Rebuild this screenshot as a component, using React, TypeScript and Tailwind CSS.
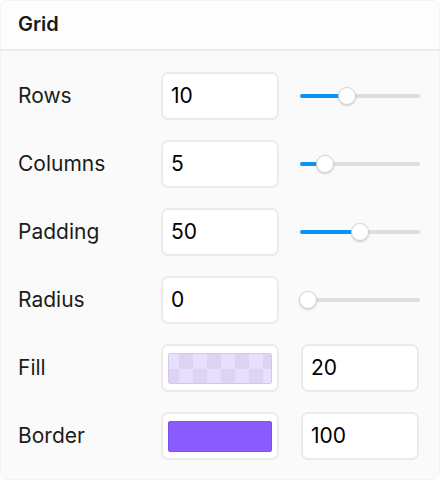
import React from "react";

const FONT = { fontFamily: "Inter, 'Noto Sans', sans-serif" };

function Slider({ value, min, max }: { value: number; min: number; max: number }) {
  const pct = (value - min) / (max - min);
  const thumbLeft = 8 + pct * 104;
  return (
    <div className="relative h-[18px] w-[120px]">
      <div className="absolute left-0 right-0 top-[7px] h-[4px] rounded-full bg-[#dedede]" />
      <div
        className="absolute left-0 top-[7px] h-[4px] rounded-full bg-[#0a95f6]"
        style={{ width: thumbLeft }}
      />
      <div
        className="absolute top-0 h-[18px] w-[18px] rounded-full border border-[#d4d4d4] bg-white shadow-[0_1px_2px_rgba(0,0,0,0.18)]"
        style={{ left: thumbLeft - 9 }}
      />
    </div>
  );
}

function NumBox({ v }: { v: string }) {
  return (
    <div className="flex h-[48px] w-[118px] items-center rounded-[7px] border-2 border-[#ebebeb] bg-white pl-[8px] text-[21px] text-black">
      {v}
    </div>
  );
}

function Swatch({ kind }: { kind: "fill" | "border" }) {
  return (
    <div className="flex h-[48px] w-[118px] items-center rounded-[7px] border-2 border-[#ebebeb] bg-white px-[5px]">
      {kind === "fill" ? (
        <div className="h-[31px] w-[104px] overflow-hidden rounded-[2px] border border-[#d3c7f0]">
          <svg width="104" height="31" className="block">
            <defs>
              <pattern id="chk" x="-4" y="-1" width="28" height="31" patternUnits="userSpaceOnUse">
                <rect width="28" height="31" fill="#e7dffd" />
                <rect x="14" y="0" width="14" height="16" fill="#ddd4f4" />
                <rect x="0" y="16" width="14" height="15" fill="#ddd4f4" />
              </pattern>
            </defs>
            <rect width="104" height="31" fill="url(#chk)" />
          </svg>
        </div>
      ) : (
        <div className="h-[31px] w-[104px] rounded-[2px] border border-[#7d52ee] bg-[#8a5cff]" />
      )}
    </div>
  );
}

function Row({ label, children }: { label: string; children: React.ReactNode }) {
  return (
    <div className="flex h-[48px] items-center">
      <div className="w-[143px] text-[21px] text-[#1c1c1c]">{label}</div>
      {children}
    </div>
  );
}

export default function App() {
  return (
    <div className="h-[480px] w-[440px] bg-white" style={FONT}>
      <div className="flex h-[480px] w-[440px] flex-col overflow-hidden rounded-[8px] border border-[#f3f3f3] bg-[#fafafa]">
        <div className="flex h-[50px] items-center border-b-2 border-[#ebebeb] bg-[#fdfdfd] pl-[17px] pb-[3px] text-[20px] font-semibold text-[#1a1a1a]">
          Grid
        </div>
        <div className="flex flex-col gap-[20px] pl-[17px] pt-[21px]">
          <Row label="Rows">
            <NumBox v="10" />
            <div className="ml-[21px]">
              <Slider value={10} min={1} max={25} />
            </div>
          </Row>
          <Row label="Columns">
            <NumBox v="5" />
            <div className="ml-[21px]">
              <Slider value={5} min={1} max={25} />
            </div>
          </Row>
          <Row label="Padding">
            <NumBox v="50" />
            <div className="ml-[21px]">
              <Slider value={50} min={0} max={100} />
            </div>
          </Row>
          <Row label="Radius">
            <NumBox v="0" />
            <div className="ml-[21px]">
              <Slider value={0} min={0} max={100} />
            </div>
          </Row>
          <Row label="Fill">
            <Swatch kind="fill" />
            <div className="ml-[22px]">
              <NumBox v="20" />
            </div>
          </Row>
          <Row label="Border">
            <Swatch kind="border" />
            <div className="ml-[22px]">
              <NumBox v="100" />
            </div>
          </Row>
        </div>
      </div>
    </div>
  );
}
